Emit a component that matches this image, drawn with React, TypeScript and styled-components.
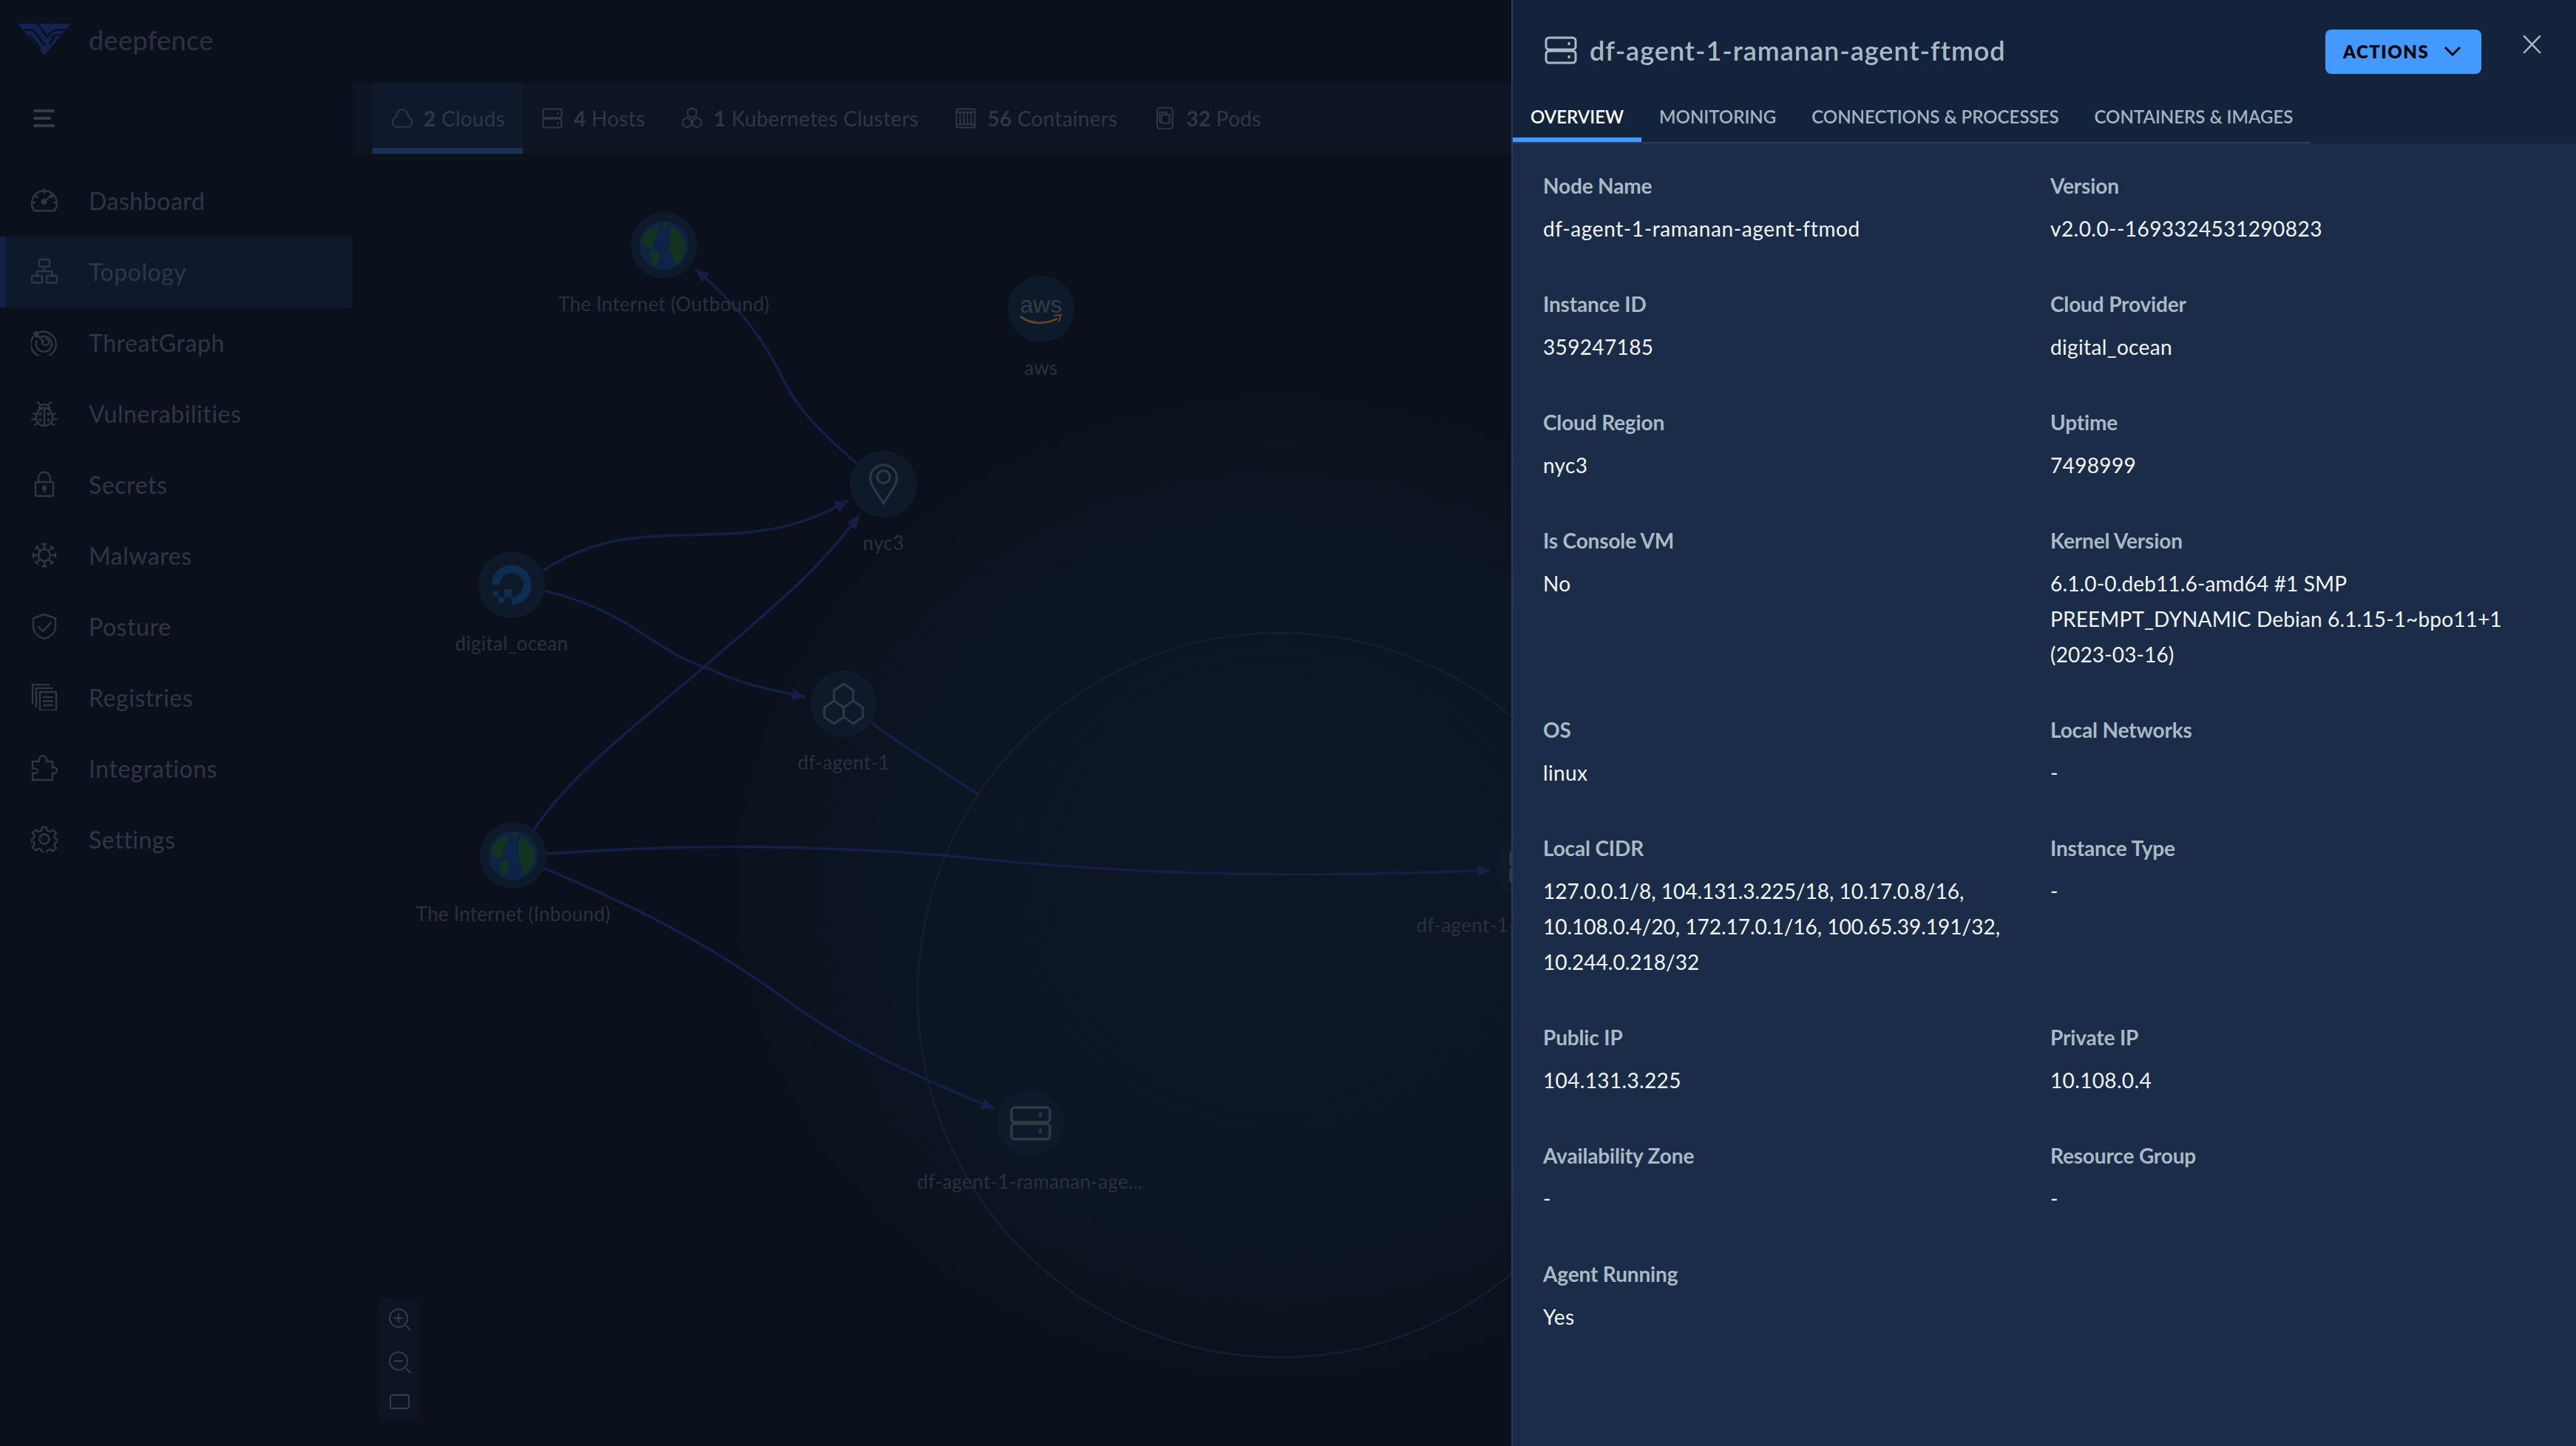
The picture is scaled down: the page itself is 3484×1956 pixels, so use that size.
import React from "react";
import styled, { createGlobalStyle } from "styled-components";

const FONT = `"Lato", "Noto Sans", sans-serif`;

const Global = createGlobalStyle`
  html, body { margin: 0; padding: 0; background: #0a111c; }
  * { box-sizing: border-box; }
`;

const Page = styled.div`
  position: relative;
  display: flex;
  width: 3484px;
  height: 1956px;
  overflow: hidden;
  background: #0a111c;
  font-family: ${FONT};
`;

const Sidebar = styled.aside`
  flex: 0 0 477px;
  display: flex;
  flex-direction: column;
`;

const Brand = styled.div`
  height: 112px;
  display: flex;
  align-items: center;
  gap: 24px;
  padding: 0 0 5px 24px;
`;

const BrandName = styled.span`
  font-size: 36px;
  color: #2c333f;
  letter-spacing: 0.4px;
`;

const BurgerRow = styled.div`
  height: 96px;
  padding-left: 45px;
  display: flex;
  align-items: center;
`;

const Burger = styled.div`
  display: flex;
  flex-direction: column;
  gap: 6px;
  width: 29px;
  span { display: block; height: 4px; border-radius: 2px; background: #353c48; }
  span:nth-child(2) { width: 24px; }
`;

const Nav = styled.nav`
  display: flex;
  flex-direction: column;
  padding-top: 16px;
`;

const NavItem = styled.div<{ $active?: boolean }>`
  height: 96px;
  display: flex;
  align-items: center;
  gap: 42px;
  padding-left: ${(p) => (p.$active ? "34px" : "42px")};
  padding-bottom: 2px;
  background: ${(p) => (p.$active ? "#0e1a2c" : "transparent")};
  border-left: ${(p) => (p.$active ? "8px solid #141f4a" : "none")};
  color: #2f3743;
  font-size: 32px;
  letter-spacing: 0.55px;
  svg { flex: 0 0 36px; }
`;

const Main = styled.main`
  flex: 1;
  display: flex;
  flex-direction: column;
  padding-top: 112px;
  min-width: 0;
`;

const TabBar = styled.div`
  height: 96px;
  flex: 0 0 96px;
  display: flex;
  padding-left: 27px;
  background: #0d1522;
`;

const GraphTab = styled.div<{ $active?: boolean }>`
  display: flex;
  align-items: center;
  gap: 14px;
  padding: 8px 24px 0 25px;
  height: 96px;
  color: #2f3743;
  font-size: 28px;
  letter-spacing: 0.25px;
  background: ${(p) => (p.$active ? "#0e1a2c" : "transparent")};
  border-bottom: 8px solid ${(p) => (p.$active ? "#1a3054" : "transparent")};
  b { font-weight: 700; }
`;

const Canvas = styled.div`
  position: relative;
  flex: 1;
`;

const GraphSvg = styled.svg`
  position: absolute;
  left: 0;
  top: 0;
`;

const Node = styled.div`
  position: absolute;
  width: 90px;
  display: flex;
  flex-direction: column;
  align-items: center;
`;

const NodeCircle = styled.div`
  width: 90px;
  height: 90px;
  flex: 0 0 90px;
  border-radius: 50%;
  background: #0e1a2a;
  svg { display: block; }
`;

const NodeLabel = styled.div`
  margin-top: 16px;
  font-size: 26px;
  line-height: 36px;
  letter-spacing: 0.3px;
  color: #2a313d;
  white-space: nowrap;
`;

const ZoomBox = styled.div`
  position: absolute;
  left: 35px;
  top: 1548px;
  width: 56px;
  height: 167px;
  border-radius: 10px;
  background: #0d1522;
  display: flex;
  flex-direction: column;
  align-items: center;
  justify-content: space-between;
  padding: 14px 0 17px;
  color: #353c48;
`;

const ZoomGlyph = styled.svg`
  margin-left: 3px;
`;

const Panel = styled.section`
  position: absolute;
  top: 0;
  right: 0;
  bottom: 0;
  width: 1440px;
  border-left: 2px solid #2a3a63;
  background: #1a2c47;
  display: flex;
  flex-direction: column;
`;

const PanelHead = styled.header`
  flex: 0 0 194px;
  background: #12233b;
  display: flex;
  flex-direction: column;
`;

const TitleRow = styled.div`
  height: 122px;
  display: flex;
  align-items: flex-start;
  padding: 40px 47px 0 43px;
`;

const Title = styled.h1`
  margin: 6px 0 0;
  flex: 1;
  display: flex;
  align-items: center;
  gap: 17px;
  font-size: 36px;
  line-height: 44px;
  font-weight: 600;
  letter-spacing: 1px;
  color: #a9b9c6;
`;

const ActionsButton = styled.button`
  width: 211px;
  height: 60px;
  border: 0;
  border-radius: 8px;
  background: #4499ff;
  color: #04070c;
  font-family: ${FONT};
  font-weight: 800;
  font-size: 24px;
  letter-spacing: 1.5px;
  display: flex;
  align-items: center;
  gap: 20px;
  padding: 0 0 2px 24px;
`;

const CloseButton = styled.div`
  margin: 8px 0 0 56px;
  width: 25px;
  height: 24px;
  color: #a9b9c6;
  svg { display: block; }
`;

const PanelTabs = styled.div`
  align-self: flex-start;
  display: flex;
  height: 72px;
  border-bottom: 2px solid #2c3a66;
`;

const PanelTab = styled.div<{ $active?: boolean }>`
  padding: 6px 24px 0;
  height: 70px;
  display: flex;
  align-items: center;
  font-size: 24px;
  font-weight: 600;
  letter-spacing: 0;
  color: ${(p) => (p.$active ? "#ffffff" : "#a3b3c0")};
  border-bottom: 6px solid ${(p) => (p.$active ? "#4499ff" : "transparent")};
`;

const Fields = styled.div`
  display: grid;
  grid-template-columns: 686px 1fr;
  row-gap: 58px;
  padding: 37px 40px 0 41px;
`;

const Field = styled.div`
  display: flex;
  flex-direction: column;
  gap: 14px;
`;

const FieldLabel = styled.div`
  font-size: 28px;
  line-height: 40px;
  font-weight: 700;
  letter-spacing: -0.15px;
  color: #a9b9c6;
`;

const FieldValue = styled.div<{ $tracking: number }>`
  font-size: 28px;
  line-height: 48px;
  letter-spacing: ${(p) => p.$tracking}px;
  color: #f2f5f8;
  span { display: block; }
`;

/* ---------- icons ---------- */
const stroke = { fill: "none", stroke: "currentColor", strokeWidth: 2.4, strokeLinecap: "round", strokeLinejoin: "round" } as const;

const Ico = ({ children, s = 36 }: { children: React.ReactNode; s?: number }) => (
  <svg width={s} height={s} viewBox="0 0 36 36" {...stroke}>{children}</svg>
);

const navIcons: Record<string, React.ReactNode> = {
  Dashboard: (
    <Ico>
      <path d="M4.2 32 A17 17 0 1 1 31.8 32 Z" />
      <path d="M18 3v5M5 11l3.5 3M31 11l-3.5 3M1.5 21H5M34.5 21H31M19 19l8-8" />
      <circle cx="17.5" cy="20" r="2.8" fill="currentColor" />
    </Ico>
  ),
  Topology: (
    <Ico>
      <rect x="11" y="2" width="14" height="9.5" rx="1.5" />
      <rect x="1" y="24" width="14" height="9.5" rx="1.5" />
      <rect x="21" y="24" width="14" height="9.5" rx="1.5" />
      <path d="M18 11.5V18M8 24v-6h20v6" />
    </Ico>
  ),
  ThreatGraph: (
    <Ico>
      <path d="M9 5.5 A17 17 0 1 1 3.5 10" />
      <path d="M11 12 A10.5 10.5 0 1 1 7.8 16" />
      <path d="M15 17 A4.5 4.5 0 1 0 20 13" />
      <path d="M17 17L9 9" />
      <path d="M2 6l6-4 3 7-4 3z" fill="currentColor" stroke="none" />
    </Ico>
  ),
  Vulnerabilities: (
    <Ico>
      <path d="M18 11c-7 0-11 6-11 13s5 11 11 11 11-4 11-11-4-13-11-13zM18 11v24" />
      <path d="M11 11c0-3 3-5 7-5s7 2 7 5zM12 6l-3-3M24 6l3-3M7 20l-4-2M29 20l4-2M6 26H1M30 26h5M8 32l-3 2M28 32l3 2" />
      <circle cx="12.5" cy="19" r="1" fill="currentColor" />
      <circle cx="23.5" cy="19" r="1" fill="currentColor" />
      <circle cx="12.5" cy="27" r="1" fill="currentColor" />
      <circle cx="23.5" cy="27" r="1" fill="currentColor" />
    </Ico>
  ),
  Secrets: (
    <Ico>
      <rect x="6" y="15" width="24" height="19" rx="1.5" />
      <path d="M10 15V9.5a8 8 0 0 1 16 0V15" />
      <circle cx="18" cy="23" r="2" fill="currentColor" />
      <path d="M18 24v4" />
    </Ico>
  ),
  Malwares: (
    <Ico>
      <circle cx="18" cy="18" r="8" />
      <path d="M18 10V3M18 26v7M10 18H3M26 18h7M12.3 12.3L7.5 7.5M23.7 23.7l4.8 4.8M23.7 12.3l4.8-4.8M12.3 23.7l-4.8 4.8" />
      <path d="M15.5 3h5M15.5 33h5M3 15.5v5M33 15.5v5M5.7 9.3l3.6-3.6M26.7 30.3l3.6-3.6M26.7 5.7l3.6 3.6M5.7 26.7l3.6 3.6" />
    </Ico>
  ),
  Posture: (
    <Ico>
      <path d="M18 2l15 5.5V19c0 8-7 13.500-15 16C10 32.500 3 27 3 19V7.500z" />
      <path d="M10 19l6 6 11-12" />
    </Ico>
  ),
  Registries: (
    <Ico>
      <path d="M2 26V1h22M7 31V6h22" />
      <rect x="12" y="11" width="22" height="25" />
      <path d="M17 18h12M17 23.500h12M17 29h12" />
    </Ico>
  ),
  Integrations: (
    <Ico>
      <path d="M2 34V24.500c5 1.500 7-.5 7-3s-3-4-7-2.500V9h9c-1-5 2-7.500 5-7.500S22 4 20.500 9H29v8.500c3-1.500 6 .5 6 3.500s-3 5-6 3.500V34z" />
    </Ico>
  ),
  Settings: (
    <Ico>
      <circle cx="18" cy="18" r="6.500" />
      <path d="M15 2h6l1 4.500 3.800 1.600L29.700 5.500l4.200 4.300-2.700 3.800L32.800 17.400 36 18.500v3l-3.200 1-1.600 3.800 2.700 3.900-4.200 4.300-3.900-2.700-3.800 1.600L21 36h-6l-1-3.600-3.800-1.600-3.900 2.700-4.200-4.300 2.700-3.900-1.600-3.800L0 21.500v-3l3.200-1.100 1.600-3.800-2.700-3.800 4.200-4.300 3.900 2.600L14 6.500z" />
    </Ico>
  ),
};

const tabIcons: Record<string, React.ReactNode> = {
  cloud: (
    <Ico s={30}>
      <path d="M10 32C5 32 2 28 2 24c0-4 3-7 6-8 0-7 5-12 10-12s10 5 10 12c3 1 6 4 6 8 0 4-3 8-8 8z" />
    </Ico>
  ),
  host: (
    <Ico s={30}>
      <rect x="3" y="3" width="30" height="14" rx="3" />
      <rect x="3" y="19" width="30" height="14" rx="3" />
      <circle cx="27" cy="10" r=".8" />
      <circle cx="27" cy="26" r=".8" />
    </Ico>
  ),
  k8s: (
    <Ico s={30}>
      <path d="M18 1l7 4v8l-7 4-7-4V5zM10 17l7 4v8l-7 4-7-4v-8zM26 17l7 4v8l-7 4-7-4v-8z" />
    </Ico>
  ),
  container: (
    <Ico s={30}>
      <rect x="3" y="3" width="30" height="30" rx="2" />
      <path d="M3 8h30M9 8v20M15 8v20M21 8v20M27 8v20M3 28h30" />
    </Ico>
  ),
  pod: (
    <Ico s={30}>
      <rect x="6" y="1" width="25" height="34" rx="5" />
      <rect x="13" y="12" width="13" height="14" rx="2" />
      <path d="M21 12V8H10v16h3" />
    </Ico>
  ),
};

const Globe = () => (
  <svg width="90" height="90" viewBox="0 0 90 90">
    <circle cx="45" cy="45" r="33" fill="#0e2446" />
    <g fill="#12341f">
      <path d="M15 40C17 28 26 21 38 18c2 4-3 7-1 11-5 0-6 6-2 9-5 2-7 6-3 10-6 2-15-1-17-8z" />
      <path d="M28 52c6-2 13 4 11 10-2 4-4 9-7 13-4-8-6-15-4-23z" />
      <path d="M56 19c10 6 19 17 18 30-1 11-7 19-14 22-2-8-6-16-9-24 5-6-2-19 5-28z" />
      <path d="M43 13l8 1-4 10z" />
    </g>
  </svg>
);

const DoLogo = () => (
  <svg width="90" height="90" viewBox="0 0 90 90" fill="#0f2d50">
    <path d="M45 72V61a16 16 0 1 0-16-16H18a27 27 0 1 1 27 27z" />
    <rect x="35" y="51" width="10" height="11" />
    <rect x="27" y="62" width="8" height="7" />
    <rect x="20" y="54" width="7" height="6" />
  </svg>
);

const AwsLogo = () => (
  <svg width="90" height="90" viewBox="0 0 90 90">
    <text x="45" y="50" textAnchor="middle" fontFamily="Liberation Sans, sans-serif" fontSize="32" fill="#333c47">aws</text>
    <path d="M17 55c14 11 34 11 50 3" fill="none" stroke="#5e4424" strokeWidth="3" />
    <path d="M62 54l10-1-3 9" fill="none" stroke="#5e4424" strokeWidth="2" />
  </svg>
);

const NodeLine = styled.svg`
  color: #303843;
`;

const Pin = () => (
  <NodeLine width="90" height="90" viewBox="0 0 90 90" fill="none" stroke="currentColor" strokeWidth="3">
    <path d="M45 71C36 56 27 46 27 37a18 18 0 1 1 36 0C63 46 54 56 45 71z" />
    <circle cx="45" cy="35" r="8.500" />
  </NodeLine>
);

const Hexes = () => (
  <NodeLine width="90" height="90" viewBox="0 0 90 90" fill="none" stroke="currentColor" strokeWidth="3">
    <path d="M45 18l13 9v14l-13 9-13-9V27zM32 41l13 9v13l-13 9-13-9V50zM58 41l13 9v13l-13 9-13-9V50z" />
  </NodeLine>
);

const ServerShape = () => (
  <NodeLine width="90" height="90" viewBox="0 0 90 90" fill="none" stroke="currentColor" strokeWidth="3.500">
    <rect x="20" y="24" width="52" height="20" rx="5" />
    <rect x="20" y="46" width="52" height="21" rx="5" />
    <path d="M59 31v6M59 53v6" />
  </NodeLine>
);

const ORIGIN_X = 477;
const ORIGIN_Y = 208;

const nodes = [
  { x: 898, y: 332, label: "The Internet (Outbound)", icon: <Globe /> },
  { x: 1408, y: 418, label: "aws", icon: <AwsLogo /> },
  { x: 1195, y: 655, label: "nyc3", icon: <Pin /> },
  { x: 692, y: 791, label: "digital_ocean", icon: <DoLogo /> },
  { x: 1141, y: 952, label: "df-agent-1", icon: <Hexes /> },
  { x: 694, y: 1157, label: "The Internet (Inbound)", icon: <Globe /> },
  { x: 1393, y: 1519, label: "df-agent-1-ramanan-age...", icon: <ServerShape /> },
  { x: 2068, y: 1172, label: "df-agent-1-ramanan-age...", icon: <ServerShape /> },
];

const edges = [
  { d: "M1159 627C1110 585 1075 550 1055 505C1035 465 1010 425 941 364", arrow: true },
  { d: "M734 772C800 730 850 726 920 724C1010 722 1070 722 1147 677", arrow: true },
  { d: "M737 799C860 830 880 880 960 905C1000 925 1040 932 1089 943", arrow: true },
  { d: "M722 1122C780 1040 850 990 957 898C1040 825 1100 780 1162 697", arrow: true },
  { d: "M739 1155C900 1144 1050 1140 1276 1157C1500 1180 1700 1190 2016 1177", arrow: true },
  { d: "M735 1174C880 1235 970 1285 1060 1350C1150 1418 1250 1460 1345 1500", arrow: true },
  { d: "M1178 977C1220 1010 1280 1045 1322 1074", arrow: false },
];

const fields: { label: string; value: string[]; tracking?: number }[] = [
  { label: "Node Name", value: ["df-agent-1-ramanan-agent-ftmod"], tracking: 0.6 },
  { label: "Version", value: ["v2.0.0--1693324531290823"], tracking: 0.45 },
  { label: "Instance ID", value: ["359247185"] },
  { label: "Cloud Provider", value: ["digital_ocean"] },
  { label: "Cloud Region", value: ["nyc3"] },
  { label: "Uptime", value: ["7498999"] },
  { label: "Is Console VM", value: ["No"] },
  { label: "Kernel Version", value: ["6.1.0-0.deb11.6-amd64 #1 SMP", "PREEMPT_DYNAMIC Debian 6.1.15-1~bpo11+1", "(2023-03-16)"], tracking: 0.15 },
  { label: "OS", value: ["linux"] },
  { label: "Local Networks", value: ["-"] },
  { label: "Local CIDR", value: ["127.0.0.1/8, 104.131.3.225/18, 10.17.0.8/16,", "10.108.0.4/20, 172.17.0.1/16, 100.65.39.191/32,", "10.244.0.218/32"], tracking: 0 },
  { label: "Instance Type", value: ["-"] },
  { label: "Public IP", value: ["104.131.3.225"] },
  { label: "Private IP", value: ["10.108.0.4"] },
  { label: "Availability Zone", value: ["-"] },
  { label: "Resource Group", value: ["-"] },
  { label: "Agent Running", value: ["Yes"] },
];

const graphTabs = [
  { icon: "cloud", n: "2", t: "Clouds", active: true },
  { icon: "host", n: "4", t: "Hosts" },
  { icon: "k8s", n: "1", t: "Kubernetes Clusters" },
  { icon: "container", n: "56", t: "Containers" },
  { icon: "pod", n: "32", t: "Pods" },
];

const navNames = ["Dashboard", "Topology", "ThreatGraph", "Vulnerabilities", "Secrets", "Malwares", "Posture", "Registries", "Integrations", "Settings"];

const Logo = () => (
  <svg width="72" height="43" viewBox="0 0 72 43">
    <path d="M0 0H72L36 43z" fill="#14224f" />
    <g fill="none" stroke="#0a111c" strokeWidth="2.600">
      <path d="M9 8.500H21L37 30" />
      <path d="M16 15L31 35" />
      <path d="M27 0L40 18C44 10 48 8 66 8" />
      <path d="M45 19c3-3 6-4 13-4" />
      <path d="M43 28L50 17" />
    </g>
  </svg>
);

const Zoomer = ({ minus }: { minus?: boolean }) => (
  <ZoomGlyph width="32" height="32" viewBox="0 0 32 32" fill="none" stroke="currentColor" strokeWidth="2">
    <circle cx="13" cy="13" r="12" />
    <path d="M7 13h12" />
    {!minus && <path d="M13 7v12" />}
    <path d="M23 23l6 6" />
  </ZoomGlyph>
);

const App = () => (
  <Page>
    <Global />
    <Sidebar>
      <Brand>
        <Logo />
        <BrandName>deepfence</BrandName>
      </Brand>
      <BurgerRow>
        <Burger>
          <span />
          <span />
          <span />
        </Burger>
      </BurgerRow>
      <Nav>
        {navNames.map((n) => (
          <NavItem key={n} $active={n === "Topology"}>
            {navIcons[n]}
            {n}
          </NavItem>
        ))}
      </Nav>
    </Sidebar>
    <Main>
      <TabBar>
        {graphTabs.map((t) => (
          <GraphTab key={t.t} $active={t.active}>
            {tabIcons[t.icon]}
            <span>
              <b>{t.n}</b> {t.t}
            </span>
          </GraphTab>
        ))}
      </TabBar>
      <Canvas>
        <GraphSvg width={3007} height={1748} viewBox={`${ORIGIN_X} ${ORIGIN_Y} 3007 1748`} fill="none">
          <defs>
            <marker id="tip" markerUnits="userSpaceOnUse" markerWidth="20" markerHeight="16" refX="18" refY="8" orient="auto">
              <path d="M0 0L18 8L0 16z" fill="#141f48" />
            </marker>
            <radialGradient id="haze" gradientUnits="userSpaceOnUse" cx="1731" cy="1200" r="760" gradientTransform="translate(0 120) scale(1 .9)">
              <stop offset="0" stopColor="#0d1726" />
              <stop offset=".7" stopColor="#0c1522" />
              <stop offset="1" stopColor="#0a111c" />
            </radialGradient>
          </defs>
          <rect x={ORIGIN_X} y={ORIGIN_Y} width="3007" height="1748" fill="url(#haze)" />
          <circle cx="1731" cy="1346" r="490" stroke="#151c2a" strokeWidth="3" />
          {edges.map((e) => (
            <path key={e.d} d={e.d} stroke="#141f48" strokeWidth="3.500" markerEnd={e.arrow ? "url(#tip)" : undefined} />
          ))}
        </GraphSvg>
        {nodes.map((n, i) => (
          <Node key={i} style={{ left: n.x - 45 - ORIGIN_X, top: n.y - 45 - ORIGIN_Y }}>
            <NodeCircle>{n.icon}</NodeCircle>
            <NodeLabel>{n.label}</NodeLabel>
          </Node>
        ))}
        <ZoomBox>
          <Zoomer />
          <Zoomer minus />
          <svg width="28" height="20" viewBox="0 0 28 20" fill="none" stroke="currentColor" strokeWidth="2">
            <rect x="2" y="1" width="25" height="18" rx="2" />
          </svg>
        </ZoomBox>
      </Canvas>
    </Main>
    <Panel>
      <PanelHead>
        <TitleRow>
          <Title>
            <svg width="44" height="38" viewBox="0 0 44 38" fill="none" stroke="currentColor" strokeWidth="3">
              <rect x="2" y="2" width="40" height="16" rx="4" />
              <rect x="2" y="20" width="40" height="16" rx="4" />
              <path d="M33 8v4M33 26v4" />
            </svg>
            df-agent-1-ramanan-agent-ftmod
          </Title>
          <ActionsButton>
            ACTIONS
            <svg width="24" height="14" viewBox="0 0 24 14" fill="none" stroke="currentColor" strokeWidth="3">
              <path d="M2 2l10 10L22 2" />
            </svg>
          </ActionsButton>
          <CloseButton>
            <svg width="25" height="24" viewBox="0 0 25 24" fill="none" stroke="currentColor" strokeWidth="2.500">
              <path d="M1 0l23 24M24 0L1 24" />
            </svg>
          </CloseButton>
        </TitleRow>
        <PanelTabs>
          <PanelTab $active>OVERVIEW</PanelTab>
          <PanelTab>MONITORING</PanelTab>
          <PanelTab>CONNECTIONS &amp; PROCESSES</PanelTab>
          <PanelTab>CONTAINERS &amp; IMAGES</PanelTab>
        </PanelTabs>
      </PanelHead>
      <Fields>
        {fields.map((f) => (
          <Field key={f.label}>
            <FieldLabel>{f.label}</FieldLabel>
            <FieldValue $tracking={f.tracking ?? 0.35}>
              {f.value.map((line) => (
                <span key={line}>{line}</span>
              ))}
            </FieldValue>
          </Field>
        ))}
      </Fields>
    </Panel>
  </Page>
);

export default App;
